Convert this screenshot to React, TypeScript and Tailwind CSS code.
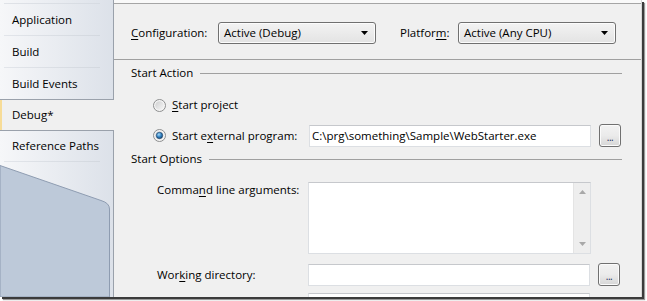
import React from 'react';

const tabs = [
  { label: 'Application' },
  { label: 'Build' },
  { label: 'Build Events' },
  { label: 'Debug*', selected: true },
  { label: 'Reference Paths' },
];

const font = { fontFamily: '"Open Sans", "Noto Sans", sans-serif' };

const Radio = ({ checked }: { checked?: boolean }) => (
  <svg width="13" height="13" viewBox="0 0 13 13" className="shrink-0">
    <defs>
      <linearGradient id="rgfill" x1="0" y1="0" x2="1" y2="1">
        <stop offset="0" stopColor="#cfd0d1" />
        <stop offset="1" stopColor="#f6f6f6" />
      </linearGradient>
      <radialGradient id="rgdot" cx="0.4" cy="0.35" r="0.7">
        <stop offset="0" stopColor="#a6dbfa" />
        <stop offset="0.55" stopColor="#2f7fc0" />
        <stop offset="1" stopColor="#17456f" />
      </radialGradient>
    </defs>
    <circle cx="6.5" cy="6.5" r="6" fill="#f4f4f4" stroke="#8d8e8f" />
    <circle cx="6.5" cy="6.5" r="4.3" fill="url(#rgfill)" />
    {checked && <circle cx="6.5" cy="6.5" r="3.2" fill="url(#rgdot)" stroke="#1c3e63" strokeWidth="0.6" />}
  </svg>
);

const Dropdown = ({ value }: { value: string }) => (
  <div className="w-[158px] h-[22px] rounded-[3px] border border-[#707070] bg-gradient-to-b from-[#f3f3f3] to-[#e3e3e3] flex items-center pl-[5px] pr-[7px] shadow-[inset_0_0_0_1px_#fcfcfc]">
    <span className="flex-1 text-[11.5px] text-black">{value}</span>
    <svg width="7" height="4" viewBox="0 0 7 4">
      <path d="M0 0 H7 L3.5 4 Z" fill="#000" />
    </svg>
  </div>
);

const TextBox = ({ value }: { value?: string }) => (
  <div className="w-[282px] h-[22px] bg-white border border-[#dcdfe3] border-t-[#c6c8cc] flex items-center pl-[2px] text-[11.5px] text-black">
    {value}
  </div>
);

const BrowseButton = () => (
  <div className="w-[22px] h-[23px] rounded-[3px] border border-[#707070] bg-gradient-to-b from-[#f2f2f2] via-[#ebebeb] to-[#d6d6d6] flex items-center justify-center shadow-[inset_0_0_0_1px_#fbfbfb]">
    <span className="text-[10px] leading-none text-[#1f2a5a] mt-[3px] tracking-[-0.5px]">...</span>
  </div>
);

const SectionHeading = ({ title }: { title: string }) => (
  <div className="flex items-center h-[16px] pl-[17px] pr-[19px]">
    <span className="text-[11.5px] text-black whitespace-nowrap">{title}</span>
    <div className="flex-1 h-px bg-[#a0a0a0] ml-[7px]" />
  </div>
);

const TabStrip = () => (
  <div className="w-[114px] shrink-0 flex flex-col bg-gradient-to-r from-[#f6f7f9] to-[#dce1e9]">
    <div className="h-[3px] shrink-0 border-r border-[#9aa1ab]" />
    <div className="h-px shrink-0 flex border-r border-[#9aa1ab]">
      <div className="ml-[4px] w-[96px] bg-gradient-to-r from-[#dfe2e7] to-[#d6dbe2]" />
    </div>
    {tabs.map((tab, i) => {
      if (tab.selected) {
        return (
          <div key={i} className="h-[30px] shrink-0 flex items-center pl-[10px] bg-[#f0f0f0] border-l-2 border-[#f7dc97] text-[11.5px] text-black">
            {tab.label}
          </div>
        );
      }
      const before = tabs[i + 1]?.selected;
      const after = tabs[i - 1]?.selected;
      return (
        <div
          key={i}
          className={`h-[32px] shrink-0 flex flex-col border-r border-[#9aa1ab] ${after ? 'border-t border-t-[#9aa1ab]' : ''}`}
        >
          <div className="flex-1 flex items-center pl-[12px] text-[11.5px] text-black">{tab.label}</div>
          {before ? (
            <div className="h-px bg-[#9aa1ab]" />
          ) : (
            <div className="h-px ml-[4px] w-[96px] bg-gradient-to-r from-[#e2e5ea] to-[#d3d8df]" />
          )}
        </div>
      );
    })}
    <div className="flex-1 border-r border-[#9aa1ab] pt-[3px]">
      <svg width="113" height="132" viewBox="0 0 113 132" className="block">
        <path d="M0 0.5 L101 35.5 Q109.5 38 109.5 44 L109.5 132 L0 132 Z" fill="#bdc9d9" stroke="#8e9cb1" strokeWidth="1" />
      </svg>
    </div>
  </div>
);

const App = () => {
  return (
    <div className="w-[647px] h-[301px] bg-white overflow-hidden" style={font}>
      <div className="w-[642px] h-[297px] flex bg-[#f0f0f0] shadow-[2px_2px_0_0_#3b3b3b,3px_3px_1px_0_#9a9a9a] border-r border-[#d6d6d6] overflow-hidden">
        <TabStrip />
        <div className="flex-1 min-w-0">
          <div className="h-[3px] bg-[#f9f9f9]" />
          <div className="h-px bg-[#a5a5a5]" />
          <div className="flex items-center pt-[18px] pl-[17px]">
            <span className="w-[87px] text-[11.5px] text-black">
              <u className="underline-offset-2">C</u>onfiguration:
            </span>
            <Dropdown value="Active (Debug)" />
            <span className="ml-[24px] w-[58px] text-[11.5px] text-black">
              Platfor<u className="underline-offset-2">m</u>:
            </span>
            <Dropdown value="Active (Any CPU)" />
          </div>
          <div className="h-px bg-[#a0a0a0] mt-[15px]" />
          <div className="pt-[5px]">
            <SectionHeading title="Start Action" />
          </div>
          <div className="flex items-center h-[22px] mt-[13px] pl-[39px] gap-[6px]">
            <Radio />
            <span className="text-[11.5px] text-black">
              <u className="underline-offset-2">S</u>tart project
            </span>
          </div>
          <div className="flex items-center h-[23px] mt-[8px] pl-[39px]">
            <Radio checked />
            <span className="w-[137px] ml-[6px] text-[11.5px] text-black">
              Start e<u className="underline-offset-2">x</u>ternal program:
            </span>
            <TextBox value="C:\prg\something\Sample\WebStarter.exe" />
            <div className="ml-[8px]">
              <BrowseButton />
            </div>
          </div>
          <div className="pt-[4px]">
            <SectionHeading title="Start Options" />
          </div>
          <div className="flex items-start mt-[15px] pl-[43px]">
            <span className="w-[151px] text-[11.5px] text-black leading-[16px]">
              Comma<u className="underline-offset-2">n</u>d line arguments:
            </span>
            <div className="w-[283px] h-[72px] bg-white border border-[#dcdfe3] border-t-[#c6c8cc] flex">
              <div className="flex-1" />
              <div className="w-[17px] bg-[#eeeeee] border-l border-[#e4e4e4] flex flex-col items-center justify-between py-[7px]">
                <svg width="7" height="4" viewBox="0 0 7 4">
                  <path d="M3.5 0 L7 4 H0 Z" fill="#a8a8a8" />
                </svg>
                <svg width="7" height="4" viewBox="0 0 7 4">
                  <path d="M0 0 H7 L3.5 4 Z" fill="#a8a8a8" />
                </svg>
              </div>
            </div>
          </div>
          <div className="flex items-center h-[23px] mt-[9px] pl-[43px]">
            <span className="w-[151px] text-[11.5px] text-black">
              Wor<u className="underline-offset-2">k</u>ing directory:
            </span>
            <TextBox />
            <div className="ml-[8px]">
              <BrowseButton />
            </div>
          </div>
          <div className="flex mt-[7px] pl-[194px]">
            <TextBox />
          </div>
        </div>
      </div>
    </div>
  );
};

export default App;
